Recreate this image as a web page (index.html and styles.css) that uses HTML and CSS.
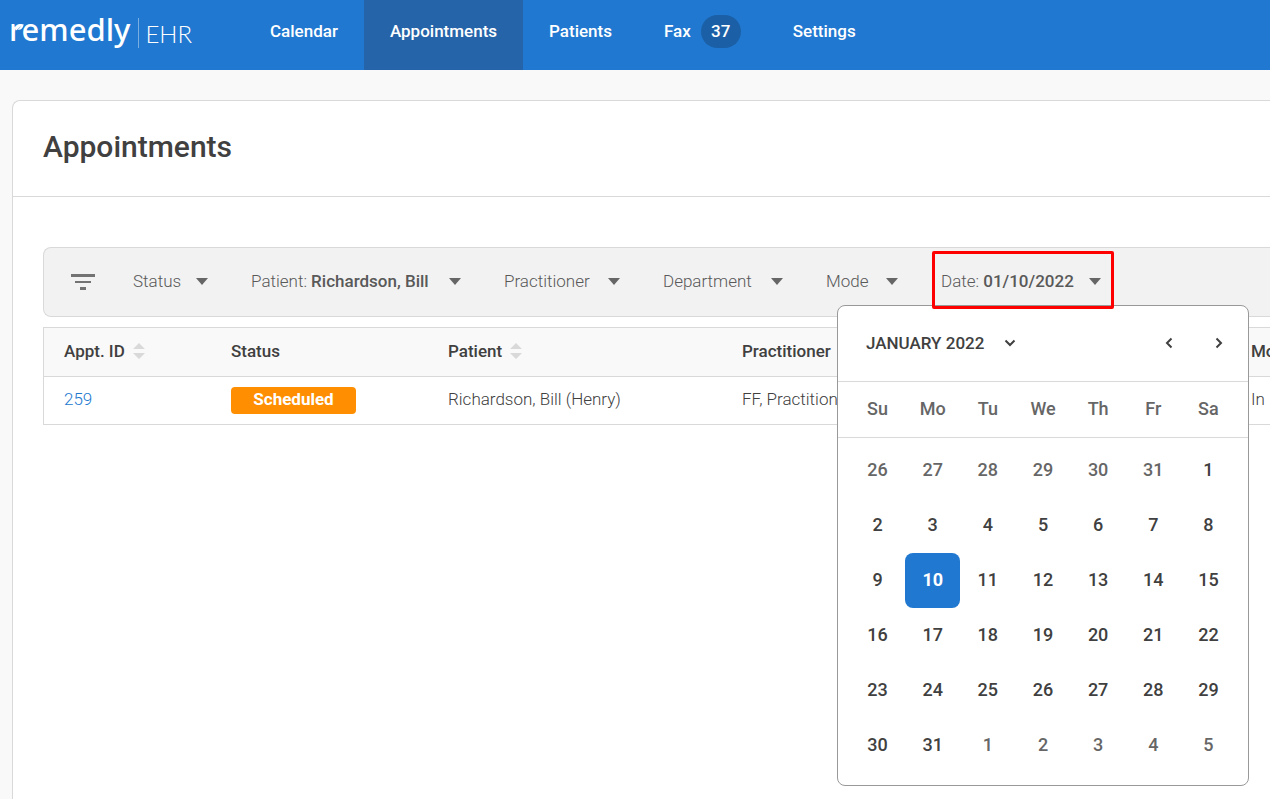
FILE: index.html
```html
<!DOCTYPE html>
<html lang="en">
<head>
<meta charset="utf-8">
<title>Appointments</title>
<link rel="stylesheet" href="styles.css">
</head>
<body>
<header class="topbar">
  <a class="brand" href="#">
    <span class="brand-name">remedly<svg class="leaf" width="8" height="8" viewBox="0 0 10 10"><path d="M0 9.500C-0.500 4 3.500 1 9.500 1.500C9 7 5.500 9 2 8.500Z" fill="#fff"/><path d="M0.500 9.500L5.500 5" stroke="#2078d0" stroke-width="0.700"/></svg></span>
    <span class="brand-product">EHR</span>
  </a>
  <nav class="nav">
    <a class="nav-link" href="#">Calendar</a>
    <a class="nav-link active" href="#">Appointments</a>
    <a class="nav-link" href="#">Patients</a>
    <a class="nav-link" href="#">Fax <span class="count">37</span></a>
    <a class="nav-link" href="#">Settings</a>
  </nav>
</header>
<main class="panel">
  <div class="panel-head"><h1>Appointments</h1></div>
  <div class="panel-body">
    <div class="filters">
      <svg class="filter-icon" width="24" height="20" viewBox="0 0 24 20" fill="#737373"><path d="M0 4h24v3H0zM4 11h16v2H4zM9 17h6v3H9z"/></svg>
      <button class="filter w-status"><span>Status</span><i class="caret"></i></button>
      <button class="filter w-patient"><span>Patient: <b>Richardson, Bill</b></span><i class="caret"></i></button>
      <button class="filter w-practitioner"><span>Practitioner</span><i class="caret"></i></button>
      <button class="filter w-department"><span>Department</span><i class="caret"></i></button>
      <button class="filter w-mode"><span>Mode</span><i class="caret"></i></button>
      <div class="date-filter">
        <button class="filter date-button"><span>Date: <b>01/10/2022</b></span><i class="caret"></i></button>
        <div class="picker">
          <div class="picker-head">
            <button class="month">JANUARY 2022 <svg width="12" height="8" viewBox="0 0 12 8"><path d="M1.500 1.500L6 6l4.500-4.500"/></svg></button>
            <button class="step" aria-label="Previous month"><svg width="8" height="12" viewBox="0 0 8 12"><path d="M6.500 1.500L2 6l4.500 4.500"/></svg></button>
            <button class="step" aria-label="Next month"><svg width="8" height="12" viewBox="0 0 8 12"><path d="M1.500 1.500L6 6l-4.500 4.500"/></svg></button>
          </div>
          <div class="weekdays"><span>Su</span><span>Mo</span><span>Tu</span><span>We</span><span>Th</span><span>Fr</span><span>Sa</span></div>
          <div class="days">
            <button class="out">26</button><button class="out">27</button><button class="out">28</button><button class="out">29</button><button class="out">30</button><button class="out">31</button><button>1</button>
            <button>2</button><button>3</button><button>4</button><button>5</button><button>6</button><button>7</button><button>8</button>
            <button>9</button><button class="selected">10</button><button>11</button><button>12</button><button>13</button><button>14</button><button>15</button>
            <button>16</button><button>17</button><button>18</button><button>19</button><button>20</button><button>21</button><button>22</button>
            <button>23</button><button>24</button><button>25</button><button>26</button><button>27</button><button>28</button><button>29</button>
            <button>30</button><button>31</button><button class="out">1</button><button class="out">2</button><button class="out">3</button><button class="out">4</button><button class="out">5</button>
          </div>
        </div>
      </div>
    </div>
    <table class="list">
      <colgroup><col class="c-id"><col class="c-status"><col class="c-patient"><col><col class="c-mode"></colgroup>
      <thead>
        <tr>
          <th><span class="sortable">Appt. ID <svg class="sort" width="12" height="16" viewBox="0 0 12 16"><path d="M6 0l6 6H0zM0 10h12l-6 6z"/></svg></span></th>
          <th>Status</th>
          <th><span class="sortable">Patient <svg class="sort" width="12" height="16" viewBox="0 0 12 16"><path d="M6 0l6 6H0zM0 10h12l-6 6z"/></svg></span></th>
          <th>Practitioner</th>
          <th>Mo</th>
        </tr>
      </thead>
      <tbody>
        <tr>
          <td><a href="#">259</a></td>
          <td class="status-cell"><span class="badge">Scheduled</span></td>
          <td>Richardson, Bill (Henry)</td>
          <td>FF, Practitioner</td>
          <td>In</td>
        </tr>
      </tbody>
    </table>
  </div>
</main>
</body>
</html>
```
FILE: styles.css
```css
* { box-sizing: border-box; }
html, body { height: 100%; }
body {
  margin: 0;
  display: flex;
  flex-direction: column;
  overflow: hidden;
  background: #f9f9f9;
  color: #404040;
  font: 17px/24px Roboto, "Liberation Sans", sans-serif;
}
button { border: 0; padding: 0; background: none; color: inherit; font: inherit; cursor: pointer; }
a { color: #2078d0; text-decoration: none; }
b { font-weight: 500; }

.topbar { display: flex; flex: none; height: 70px; padding-left: 9px; background: #2078d0; }
.brand { display: flex; width: 235px; height: 66px; align-items: center; color: #fff; }
.brand-name { position: relative; padding-bottom: 8px; font: 500 31px/42px "Noto Sans", sans-serif; }
.leaf { position: absolute; left: 7px; top: 15px; }
.brand-product {
  margin-left: 8px;
  padding: 2px 0 0 6px;
  border-left: 1px solid #79aee3;
  font: 300 24px/28px Lato, sans-serif;
}
.nav { display: flex; }
.nav-link { display: flex; align-items: center; gap: 10px; padding: 0 26px 8px; color: #fff; font-weight: 500; }
.nav-link.active { background: #2564a8; }
.count { width: 40px; height: 33px; border-radius: 17px; background: #1b60a6; line-height: 33px; text-align: center; }

.panel {
  flex: 1;
  margin: 30px 0 0 12px;
  border: solid #d9d9d9;
  border-width: 1px 0 0 1px;
  border-radius: 8px 0 0 0;
  background: #fff;
}
.panel-head { padding: 28px 30px 32px; border-bottom: 1px solid #d9d9d9; }
h1 { margin: 0; font-size: 30px; line-height: 35px; font-weight: 500; }
.panel-body { padding: 50px 0 0 30px; }

.filters {
  display: flex;
  align-items: center;
  gap: 43px;
  height: 70px;
  padding: 0 0 4px 27px;
  border: solid #d9d9d9;
  border-width: 1px 0 1px 1px;
  border-radius: 8px 0 0 8px;
  background: #f2f2f2;
  color: #595959;
}
.filter-icon { flex: none; margin-right: -5px; }
.filter { display: flex; flex: none; align-items: center; justify-content: space-between; padding-top: 2px; white-space: nowrap; font-weight: 300; }
.caret { border: solid transparent; border-width: 7px 6px 0; border-top-color: #666; }
.w-status { width: 75px; }
.w-patient { width: 210px; }
.w-practitioner { width: 116px; }
.w-department { width: 120px; }
.w-mode { width: 72px; }
.date-filter { position: relative; flex: none; margin-left: -9px; }
.date-button { position: relative; z-index: 2; width: 182px; height: 58px; padding: 2px 10px 0 6px; border: 3px solid #f00; border-radius: 2px; }

.picker {
  position: absolute;
  z-index: 1;
  top: 54px;
  left: -95px;
  width: 412px;
  border: 1px solid #999;
  border-radius: 8px;
  background: #fff;
  color: #404040;
  font-weight: 500;
}
.picker-head { display: flex; align-items: center; height: 76px; padding: 0 4px 2px 28px; border-bottom: 1px solid #d9d9d9; }
.picker svg { fill: none; stroke: #404040; stroke-width: 2; }
.month { display: flex; align-items: center; gap: 20px; margin-right: auto; }
.step { width: 50px; height: 50px; }
.weekdays, .days { display: grid; grid-template-columns: repeat(7, 1fr); padding: 0 12px; text-align: center; }
.weekdays { height: 56px; border-bottom: 1px solid #d9d9d9; color: #666; font-size: 18px; line-height: 54px; }
.days { padding-top: 5px; padding-bottom: 12px; font-size: 18px; }
.days button { height: 55px; padding-bottom: 2px; border-radius: 8px; }
.days .out { color: #666; }
.days .selected { background: #2078d0; color: #fff; font-weight: 700; }

.list { width: 100%; margin-top: 10px; table-layout: fixed; border-collapse: separate; border-spacing: 0; border: solid #d9d9d9; border-width: 1px 0 0 1px; }
.list th, .list td { border-bottom: 1px solid #d9d9d9; text-align: left; white-space: nowrap; }
.list th { height: 49px; padding: 0 0 2px 20px; background: #f9f9f9; font-weight: 500; }
.list td { height: 48px; padding: 0 0 4px 20px; font-weight: 300; }
.list .status-cell { padding-bottom: 0; }
.c-id { width: 167px; }
.c-status { width: 217px; }
.c-patient { width: 294px; }
.c-mode { width: 39px; }
.sortable { display: flex; align-items: center; gap: 8px; }
.sort { fill: #d9d9d9; }
.badge { display: block; width: 125px; height: 27px; border-radius: 4px; background: #ff8f00; color: #fff; font-weight: 700; line-height: 25px; text-align: center; }
```
